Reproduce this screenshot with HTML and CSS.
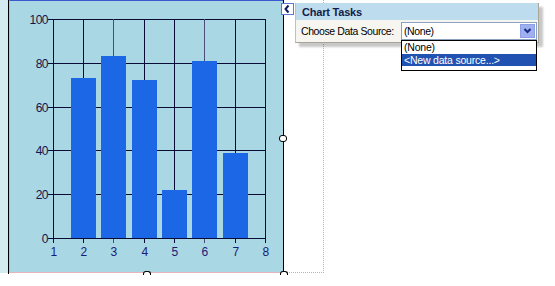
FILE: index.html
```html
<!DOCTYPE html>
<html>
<head>
<meta charset="utf-8">
<link rel="stylesheet" href="styles.css">
</head>
<body>
<div class="stage">
  <div class="strip"></div>
  <div class="chart">
    <div class="plot">
      <svg class="graph" width="273" height="271" viewBox="10 1 273 271">
        <g class="grid">
          <line x1="48" y1="19.5" x2="266" y2="19.5"/>
          <line x1="48" y1="63.5" x2="266" y2="63.5"/>
          <line x1="48" y1="107.5" x2="266" y2="107.5"/>
          <line x1="48" y1="150.5" x2="266" y2="150.5"/>
          <line x1="48" y1="194.5" x2="266" y2="194.5"/>
          <line x1="83.5" y1="19" x2="83.5" y2="243"/>
          <line class="soft" x1="113.5" y1="19" x2="113.5" y2="243"/>
          <line x1="144.5" y1="19" x2="144.5" y2="243"/>
          <line x1="174.5" y1="19" x2="174.5" y2="243"/>
          <line class="soft" x1="204.5" y1="19" x2="204.5" y2="243"/>
          <line x1="235.5" y1="19" x2="235.5" y2="243"/>
          <line x1="265.5" y1="19" x2="265.5" y2="243"/>
        </g>
        <g class="bars">
          <rect x="71" y="78" width="25" height="160"/>
          <rect x="101" y="56" width="25" height="182"/>
          <rect x="132" y="80" width="25" height="158"/>
          <rect x="162" y="190" width="25" height="48"/>
          <rect x="192" y="61" width="25" height="177"/>
          <rect x="223" y="153" width="25" height="85"/>
        </g>
        <g class="grid">
          <line x1="48" y1="238.5" x2="266" y2="238.5"/>
          <line x1="53.5" y1="19" x2="53.5" y2="243"/>
        </g>
        <g class="ylab">
          <text x="48" y="24">100</text>
          <text x="48" y="68">80</text>
          <text x="48" y="112">60</text>
          <text x="48" y="155">40</text>
          <text x="48" y="199">20</text>
          <text x="48" y="243">0</text>
        </g>
        <g class="xlab">
          <text x="53.5" y="256">1</text>
          <text x="83.5" y="256">2</text>
          <text x="113.5" y="256">3</text>
          <text x="144.5" y="256">4</text>
          <text x="174.5" y="256">5</text>
          <text x="204.5" y="256">6</text>
          <text x="235.5" y="256">7</text>
          <text x="265.5" y="256">8</text>
        </g>
      </svg>
    </div>
  </div>
  <div class="surface"></div>

  <span class="handle h-mid"></span>
  <span class="handle half h-bottom"></span>
  <span class="handle half h-corner"></span>

  <span class="chev">
    <svg width="11" height="10" viewBox="0 0 11 10"><polyline points="6.5,1.5 3.5,5 6.5,8.5" fill="none" stroke="#0c1a66" stroke-width="2"/></svg>
  </span>

  <div class="panel">
    <div class="panel-head">Chart Tasks</div>
    <div class="panel-body">
      <span class="lbl">Choose Data Source:</span>
      <span class="combo">
        <span class="combo-text">(None)</span>
        <span class="combo-btn">
          <svg width="13" height="12" viewBox="0 0 13 12"><polyline points="3.5,4 6.5,7 9.5,4" fill="none" stroke="#1a2a80" stroke-width="2"/></svg>
        </span>
      </span>
    </div>
  </div>

  <div class="list">
    <div class="item">(None)</div>
    <div class="item sel">&lt;New data source...&gt;</div>
  </div>
</div>
</body>
</html>
```
FILE: styles.css
```css
html, body {
  margin: 0;
  padding: 0;
  background: #ffffff;
}
.stage {
  position: relative;
  width: 555px;
  height: 286px;
  display: flex;
  align-items: flex-start;
  overflow: hidden;
  font-family: "Liberation Sans", Arial, sans-serif;
}
.strip {
  width: 8px;
  height: 273px;
  background: #d4ebf1;
}
.chart {
  border-left: 1px solid #000;
  border-right: 1px solid #000;
  height: 274px;
}
.plot {
  width: 273px;
  height: 271px;
  border-top: 1px solid #3a5ad0;
  border-bottom: 1px solid #e6b4bc;
  border-left: 1px solid #e6aab4;
  background: #a9d7e3;
}
.graph {
  display: block;
}
.grid line {
  stroke: #0a0a36;
  stroke-width: 1;
}
.grid line.soft {
  stroke: #4c4c7c;
}
.bars rect {
  fill: #1b67e6;
}
.ylab text, .xlab text {
  font-family: "Liberation Sans", Arial, sans-serif;
  font-size: 12px;
  letter-spacing: -0.5px;
}
.ylab text {
  text-anchor: end;
  fill: #14144e;
}
.xlab text {
  text-anchor: middle;
  fill: #1a1a78;
}
.surface {
  width: 39px;
  height: 272px;
  border-right: 1px dotted #b4b4b4;
  border-bottom: 1px dotted #b4b4b4;
}
.handle {
  position: absolute;
  width: 6px;
  height: 5px;
  background: #fff;
  border: 1px solid #000;
  border-radius: 3px;
}
.handle.half {
  height: 3px;
  border-bottom: none;
  border-radius: 3px 3px 0 0;
}
.h-mid { left: 279px; top: 135px; }
.h-bottom { left: 143px; top: 271px; }
.h-corner { left: 280px; top: 271px; }
.chev {
  position: absolute;
  left: 281px;
  top: 3px;
  width: 11px;
  height: 10px;
  border: 1px solid #5a7ad6;
  background: #fff;
  display: flex;
}
.panel {
  position: absolute;
  left: 295px;
  top: 3px;
  width: 244px;
  box-sizing: border-box;
  border-left: 1px solid #c4c0b4;
  border-right: 1px solid #a8a498;
  border-bottom: 1px solid #a8a498;
  box-shadow: 4px 4px 2px rgba(0, 0, 0, 0.22);
  font-size: 10.5px;
  letter-spacing: -0.4px;
  color: #000;
}
.panel-head {
  height: 17px;
  background: #bddced;
  padding-left: 6px;
  display: flex;
  align-items: center;
  font-weight: bold;
  font-size: 11px;
  letter-spacing: -0.2px;
  color: #141c4c;
}
.panel-body {
  height: 22px;
  background: #f7f5ef;
  display: flex;
  align-items: center;
  justify-content: space-between;
  padding: 0 1px 0 5px;
}
.combo {
  width: 136px;
  height: 18px;
  box-sizing: border-box;
  border: 1px solid #8aa2c0;
  background: #fff;
  display: flex;
  align-items: center;
  justify-content: space-between;
}
.combo-text {
  padding-left: 2px;
}
.combo-btn {
  width: 15px;
  height: 14px;
  margin-right: 1px;
  box-sizing: border-box;
  border: 1px solid #8c9ee8;
  background: #9fb0f0;
  display: flex;
  align-items: center;
  justify-content: center;
}
.list {
  position: absolute;
  left: 401px;
  top: 40px;
  width: 136px;
  height: 31px;
  box-sizing: border-box;
  border: 1px solid #000;
  background: #fff;
  font-size: 10.5px;
  letter-spacing: -0.2px;
}
.item {
  height: 12px;
  line-height: 12px;
  padding-left: 2px;
  color: #000;
}
.item:first-child {
  height: 13px;
  line-height: 12px;
}
.item.sel {
  background: #2152b2;
  color: #fff;
}
```
